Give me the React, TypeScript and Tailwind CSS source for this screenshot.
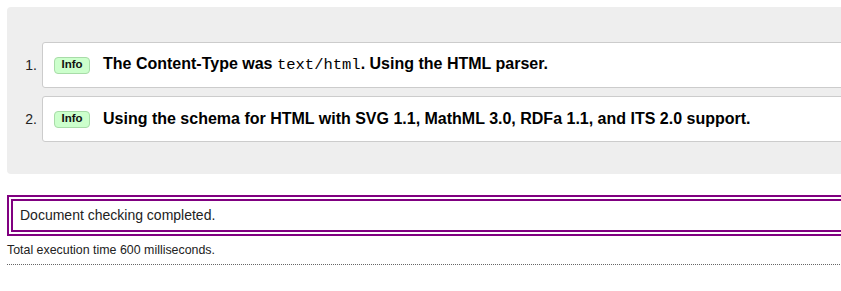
export default function App() {
  const messages = [
    {
      id: 1,
      content: (
        <>
          The Content-Type was{" "}
          <code className="font-['Liberation_Mono',monospace] font-normal text-[15.5px]">text/html</code>. Using the HTML parser.
        </>
      ),
    },
    {
      id: 2,
      content: <>Using the schema for HTML with SVG 1.1, MathML 3.0, RDFa 1.1, and ITS 2.0 support.</>,
    },
  ];

  return (
    <div className="w-full h-screen overflow-hidden bg-white font-['Liberation_Sans',Arial,sans-serif] text-black">
      <div className="w-[900px] pl-[7px] pt-[7px]">
        <ol className="bg-[#eeeeee] rounded-[4px] pt-[35px] pb-[32px] flex flex-col gap-[8px]">
          {messages.map((msg) => (
            <li key={msg.id} className="flex items-center">
              <span className="w-[35px] pr-[5px] text-right text-[14px] text-[#222]">{msg.id}.</span>
              <div className="flex-1 flex items-center h-[46px] bg-white border border-[#cccccc] rounded-[3px] pl-[11px]">
                <span className="flex items-center justify-center w-[36px] h-[17px] rounded-[4px] bg-[#ccffcc] border border-[#a8dca8] text-[11.5px] font-bold text-[#111]">
                  Info
                </span>
                <p className="ml-[13px] text-[16px] font-bold leading-none">{msg.content}</p>
              </div>
            </li>
          ))}
        </ol>

        <div className="mt-[21px] h-[41px] border-[6px] border-double border-[#800080] flex items-center pl-[7px]">
          <p className="text-[14px] text-[#222]">Document checking completed.</p>
        </div>

        <p className="mt-[7px] text-[12.4px] text-[#222] leading-[15px]">Total execution time 600 milliseconds.</p>
        <div className="mt-[6px] border-t border-dotted border-[#666]" />
      </div>
    </div>
  );
}
